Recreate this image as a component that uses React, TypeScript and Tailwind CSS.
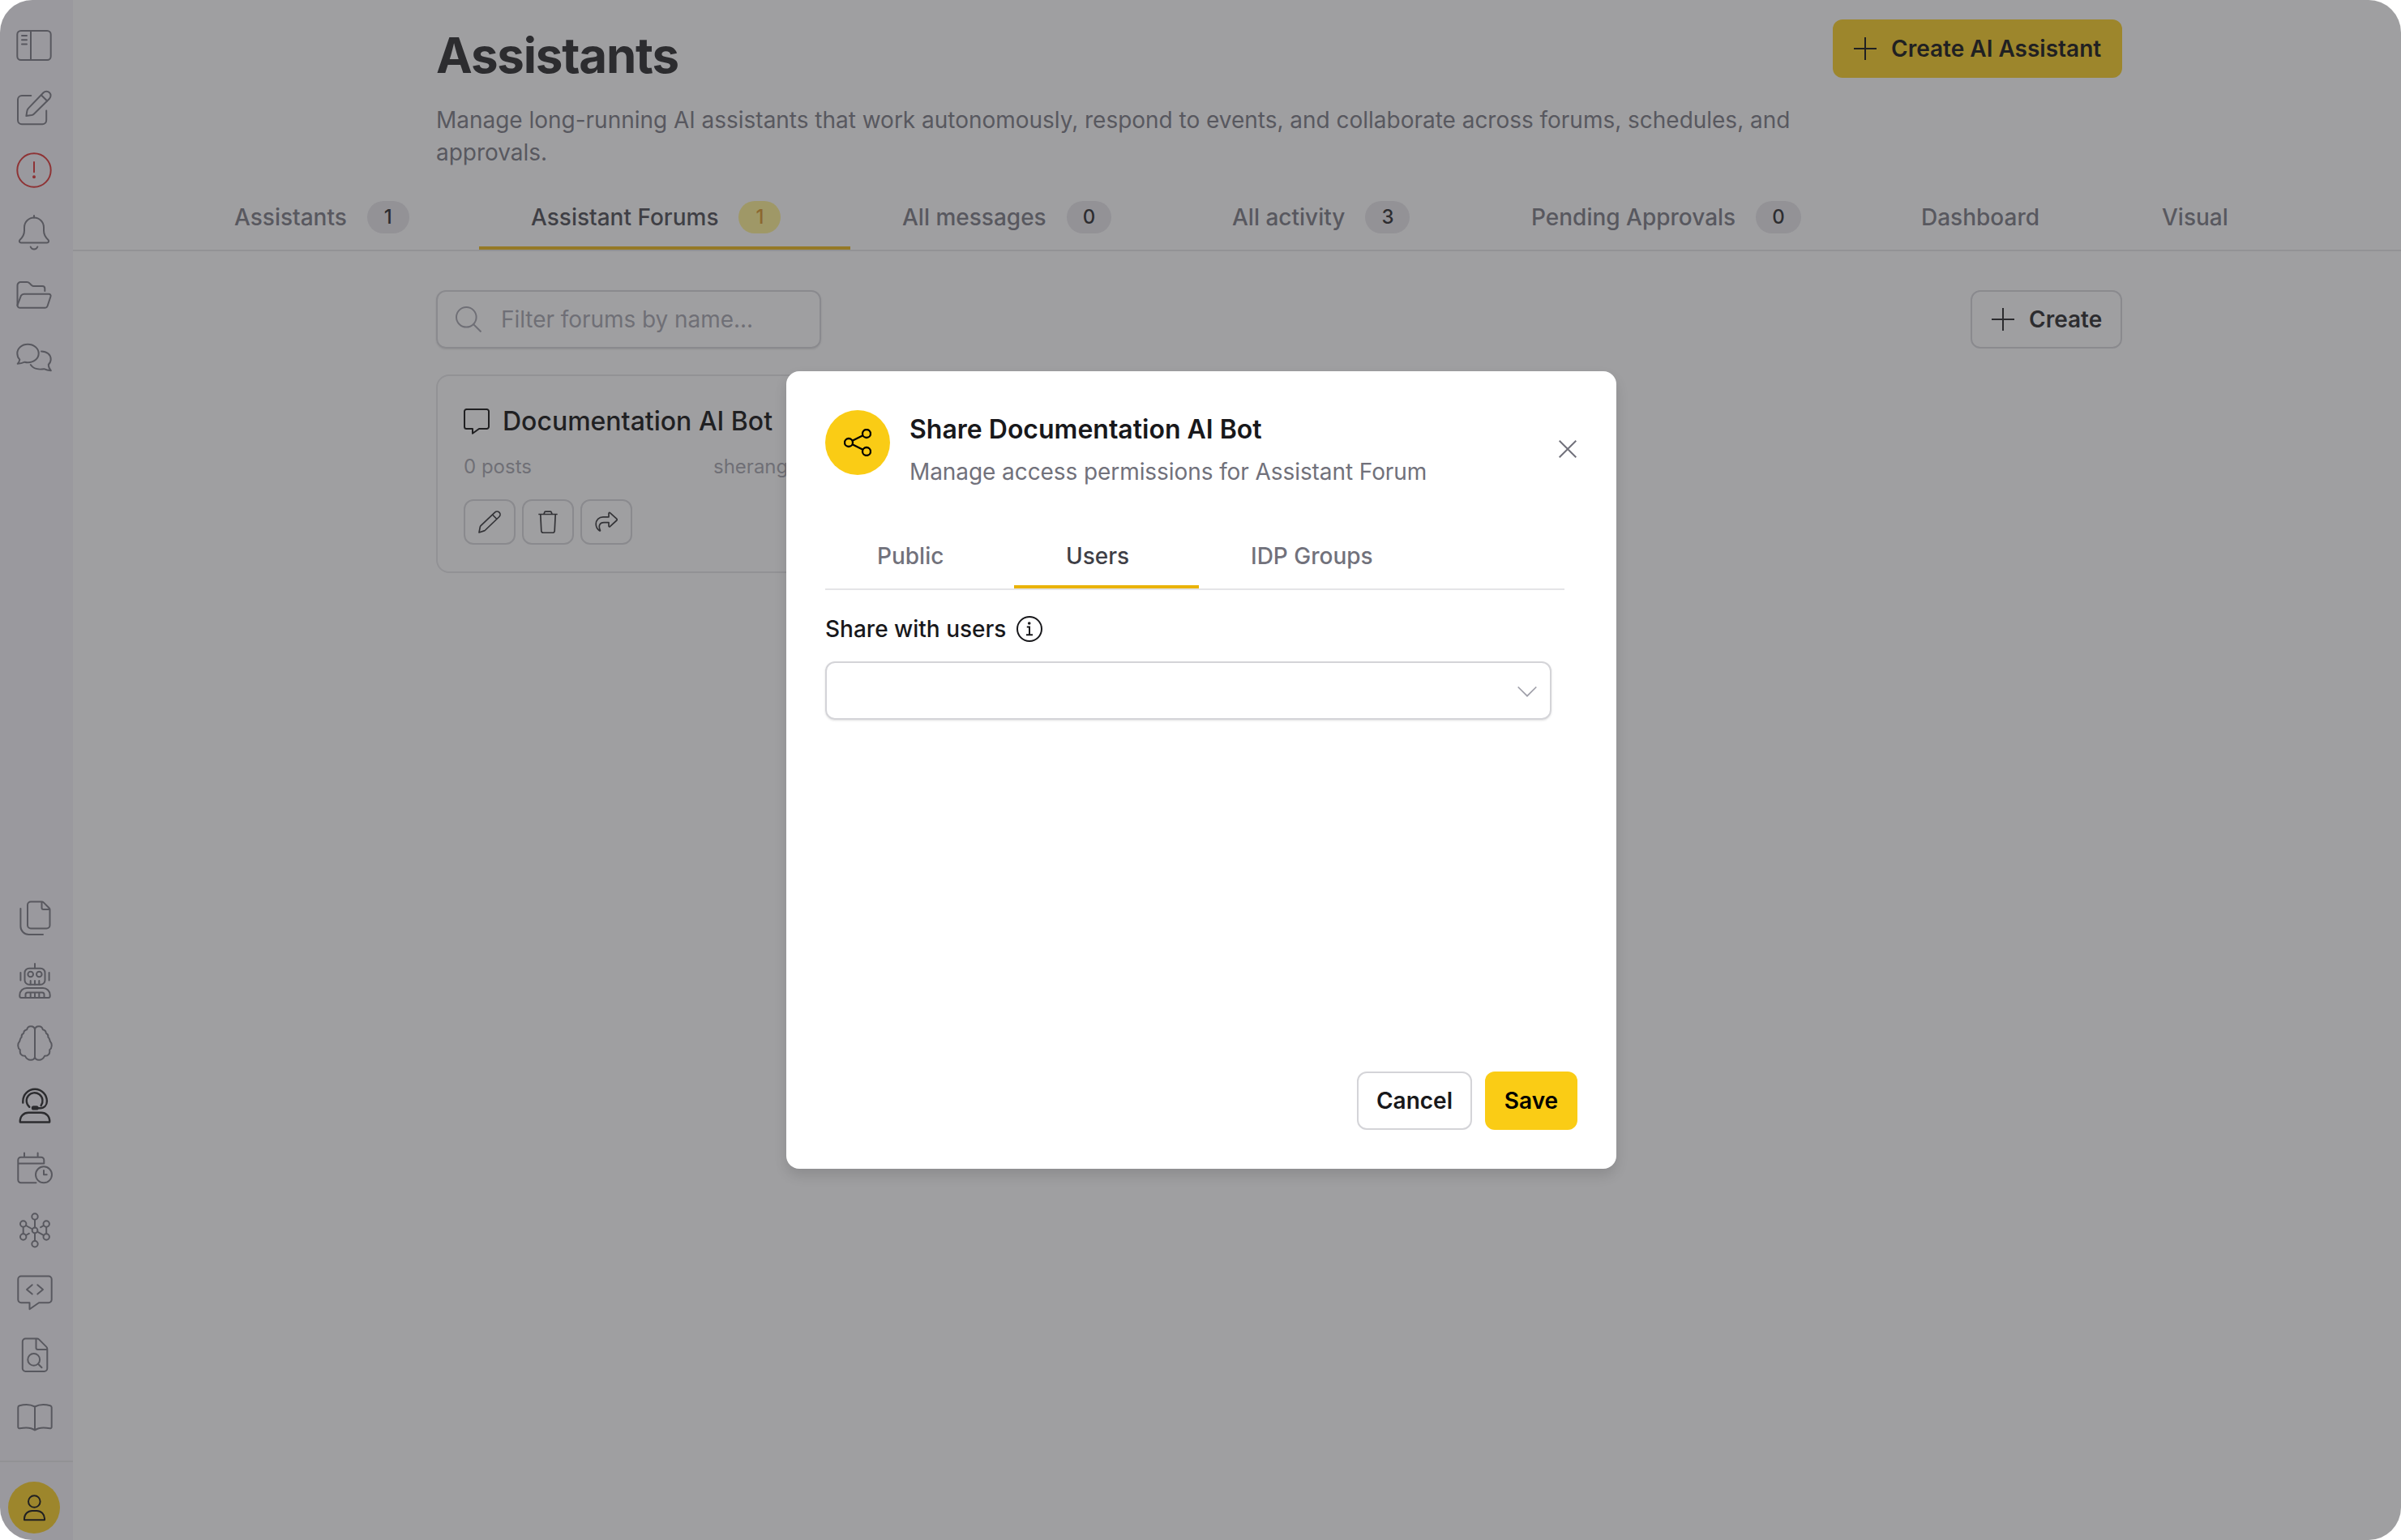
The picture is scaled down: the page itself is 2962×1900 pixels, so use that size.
import React from "react";

type IconProps = { children: React.ReactNode; className?: string };

// every sidebar glyph is drawn on a 44px grid
function NavIcon({ children, className = "text-zinc-500" }: IconProps) {
  return (
    <a href="#" className={className}>
      <svg width="44" height="44" viewBox="0 0 44 44" fill="none" stroke="currentColor" strokeWidth="2" strokeLinecap="round" strokeLinejoin="round">
        {children}
      </svg>
    </a>
  );
}

function Plus() {
  return (
    <svg width="28" height="28" viewBox="0 0 28 28" fill="none" stroke="currentColor" strokeWidth="2">
      <path d="M14 0v28M0 14h28" />
    </svg>
  );
}

function Sidebar() {
  return (
    <aside className="w-[90px] h-full shrink-0 bg-[#f5f3f8] flex flex-col">
      <nav className="flex flex-col gap-[33px] pt-[34px] pl-5">
        <NavIcon>
          <rect x="1.3" y="4" width="41.4" height="36" rx="4.5" />
          <path d="M18 4v36M7 10h6M7 15.2h6M7 20.4h6" />
        </NavIcon>
        <NavIcon>
          <path d="M18.3 7H7a5 5 0 0 0-5 5v25.3a5 5 0 0 0 5 5h25.2a5 5 0 0 0 5-5V25.5" />
          <path d="M12.4 32l1-6.2c.2-1.3.8-2.5 1.8-3.4L33.6 3.3a5.2 5.2 0 0 1 7.4 7.4L22 29.5c-.8.8-1.8 1.4-3 1.6z" />
          <path d="M30.8 6.2l7.3 7.3" />
        </NavIcon>
        <NavIcon className="text-[#dc2626]">
          <circle cx="22" cy="22" r="20.7" />
          <path d="M22 12v12.3" />
          <circle cx="22" cy="30.2" r="1" fill="currentColor" />
        </NavIcon>
        <NavIcon>
          <path d="M22 1v2.5" />
          <path d="M22 3.5a12 12 0 0 1 12 12v4c0 5.2 2.1 8.3 5.3 11.2 1.6 1.6.8 3.8-1.3 3.8H6c-2.1 0-2.9-2.2-1.3-3.8C7.9 27.8 10 24.7 10 19.5v-4a12 12 0 0 1 12-12z" />
          <path d="M17.7 39.5a4.6 4.6 0 0 0 8.6 0" />
        </NavIcon>
        <NavIcon>
          <path d="M35.3 17v-3a3 3 0 0 0-3-3H21.5c-1 0-1.8-.4-2.5-1L16.5 7.5C15.5 6.4 14.6 6 13.2 6H5.5a4 4 0 0 0-4 4v25" />
          <path d="M10.3 20.7h30a2.3 2.3 0 0 1 2.2 3l-4 12a3 3 0 0 1-2.8 2H4.3a2.8 2.8 0 0 1-2.6-3.8l4.2-11.1a4.4 4.4 0 0 1 4.4-2.1z" />
        </NavIcon>
        <NavIcon>
          <path d="M1.7 29.8c1.5-1.7 2.6-3.4 2.6-5.2C2.3 22.6 1.3 19.9 1.3 17 1.3 10.5 7 5.7 14.3 5.7S27.7 10.5 27.7 17s-6 11.2-13.4 11.2c-1.3 0-2.5-.1-3.7-.5-2.5 1.1-5.6 2-8.9 2.1z" />
          <path d="M31 14.5c7 0 11.7 4.2 11.7 9.7 0 2.7-1.1 4.9-2.9 6.6 0 2.8 1 5.3 3 7.4-3.1-.1-5.9-.7-8.5-2-6.3 1.1-13.3-.3-16.5-5.2" />
        </NavIcon>
      </nav>

      <nav className="mt-auto flex flex-col gap-[33px] pl-[21px]">
        <NavIcon>
          <path d="M17 1.5h13.5c.8 0 1.6.3 2.2.9l6.9 6.9c.6.6.9 1.4.9 2.2v19a4 4 0 0 1-4 4H17a4 4 0 0 1-4-4v-25a4 4 0 0 1 4-4z" />
          <path d="M30.5 2v7a2 2 0 0 0 2 2h7.7M4.4 10v22a10 10 0 0 0 10 10H32" />
        </NavIcon>
        <NavIcon>
          <path d="M22 1v5.5M4.4 12v9.5M39.6 12v9.5" />
          <rect x="9.5" y="6.7" width="25" height="20" rx="5.5" />
          <circle cx="16.7" cy="14" r="3.3" />
          <circle cx="27.3" cy="14" r="3.3" />
          <path d="M16.7 22v4.5M22 22v4.5M27.3 22v4.5" />
          <path d="M12 31h20a8.7 8.7 0 0 1 8.7 8.7V41a2 2 0 0 1-2 2H5.3a2 2 0 0 1-2-2v-1.3A8.7 8.7 0 0 1 12 31z" />
          <path d="M10.5 43v-4a2.5 2.5 0 0 1 2.5-2.5h18a2.5 2.5 0 0 1 2.5 2.5v4M16.7 37v6M22 37v6M27.3 37v6" />
        </NavIcon>
        <NavIcon>
          <path d="M22 5v36" />
          <path d="M22 6c0-3-2.1-4.7-5-4.7-2.5 0-4.3 1.5-4.8 3.9-2.3.4-3.9 2.2-4.1 4.6-2 .9-2.7 2.900-2.400 4.700-2.500 2-1.500 3.500-2.700 5.500-2.400 2.600-2.500 8 .8 10.300-.7 4.700 1.500 7.700 6.200 7.500 1.500 3.200 4 4.900 7 4.900 2.600 0 4.300-1 5-3.200" />
          <path d="M22 6c0-3 2.1-4.7 5-4.7 2.5 0 4.3 1.5 4.8 3.9 2.3.4 3.9 2.2 4.1 4.6 2 .9 2.7 2.900 2.400 4.700 2.500 2 1.500 3.500 2.700 5.500 2.400 2.600 2.500 8-.8 10.300.7 4.700-1.500 7.700-6.200 7.500-1.500 3.200-4 4.900-7 4.900-2.600 0-4.300-1-5-3.200" />
        </NavIcon>
        <NavIcon className="text-zinc-900">
          <g strokeWidth="2.4">
            <path d="M7.3 18.5v-2a14.8 14.8 0 0 1 29.6 0c0 5-3.2 8.8-8.6 8.8H24" />
            <path d="M15.3 23.8a9.9 9.9 0 1 1 14.3-1.8" />
            <rect x="19" y="23.4" width="6.5" height="3" rx="1.5" fill="currentColor" />
            <path d="M3.8 42.5c-.5-7.5 4.5-11.7 10.4-11.7h15.6c5.9 0 10.900 4.200 10.400 11.700z" />
          </g>
        </NavIcon>
        <NavIcon>
          <path d="M23.5 40.3H4.8a3.5 3.5 0 0 1-3.5-3.5V12.2a3.5 3.5 0 0 1 3.5-3.5h25a3.5 3.5 0 0 1 3.5 3.5v4.2H1.3M9 3.5v5M25.6 3.5v5" />
          <circle cx="33" cy="30.3" r="10" />
          <path d="M33 25v5.3h3.7" />
        </NavIcon>
        <NavIcon>
          <circle cx="22" cy="22" r="3.4" />
          <circle cx="22" cy="5" r="3.7" />
          <circle cx="22" cy="38.8" r="3.7" />
          <circle cx="7.7" cy="14" r="3.7" />
          <circle cx="7.7" cy="30" r="3.7" />
          <circle cx="36.2" cy="14" r="3.7" />
          <circle cx="36.2" cy="30" r="3.7" />
          <path d="M22 9v9.500M22 25.500V35M7.700 18v8M36.200 18v8M11 16l8 4.500M25 23.600l8 4.500M11 28l3.800-2.200M33 16l-3.800 2.200" />
        </NavIcon>
        <NavIcon>
          <path d="M5 1.5h34a3.7 3.7 0 0 1 3.7 3.7v25.3a3.7 3.7 0 0 1-3.7 3.7H27l-11.5 8v-8H5a3.7 3.7 0 0 1-3.7-3.7V5.2A3.7 3.7 0 0 1 5 1.5z" />
          <path d="M18.7 12.2L12 17.9l6.7 5.7M25.3 12.2l6.7 5.7-6.7 5.7" />
        </NavIcon>
        <NavIcon>
          <path d="M10.5 1.5h14c1 0 2 .4 2.7 1.1l9 9c.7.7 1.1 1.7 1.1 2.7v24a3.7 3.7 0 0 1-3.7 3.7H10.5a3.7 3.7 0 0 1-3.7-3.7v-33a3.7 3.7 0 0 1 3.7-3.8z" />
          <path d="M23.5 2v10.8a2.2 2.2 0 0 0 2.2 2.2H37M26 32.7l4.5 4.6" />
          <circle cx="20.7" cy="27.4" r="7.4" />
        </NavIcon>
        <NavIcon>
          <path d="M22 8.500C16.500 5.500 8.500 5.600 3 7.300c-1 .3-1.700 1.100-1.700 2.100v24.200c0 1.200 1 2 2.200 1.700C10 33.900 17 33.700 22 37.500c5-3.800 12-3.600 18.500-2.200 1.200.3 2.200-.5 2.200-1.700V9.400c0-1-.7-1.800-1.700-2.100-5.500-1.700-13.500-1.800-19 1.200zM22 8.500v29" />
        </NavIcon>
      </nav>

      <div className="mt-[31px] h-[98px] border-t-2 border-zinc-200 pt-6 pl-2.5">
        <div className="size-16 rounded-full bg-[#facc15] text-black">
          <svg width="64" height="64" viewBox="0 0 64 64" fill="none" stroke="currentColor" strokeWidth="2" strokeLinejoin="round">
            <circle cx="32.3" cy="24.5" r="7.3" />
            <path d="M20 47.2v-1.700a9.600 9.600 0 0 1 9.600-9.600h5.800a9.600 9.600 0 0 1 9.600 9.600v1.700z" />
          </svg>
        </div>
      </div>
    </aside>
  );
}

const tabs = [
  { label: "Assistants", count: 1, width: "w-[366px]" },
  { label: "Assistant Forums", count: 1, active: true, width: "w-[458px]" },
  { label: "All messages", count: 0, width: "w-[407px]" },
  { label: "All activity", count: 3, width: "w-[369px]" },
  { label: "Pending Approvals", count: 0, width: "w-[481px]" },
  { label: "Dashboard", width: "w-[297px]" },
  { label: "Visual", width: "w-[232px]" },
];

function Page() {
  return (
    <main className="flex-1 bg-white">
      <header className="ml-[448px] w-[2080px] h-[248px] flex justify-between items-start pt-6">
        <div className="w-[1700px] pt-2">
          <h1 className="text-[60px] leading-[72px] font-bold tracking-[-1.2px] text-zinc-900">Assistants</h1>
          <p className="mt-6 text-[28px] leading-[40px] tracking-[-0.02px] text-zinc-500">
            Manage long-running AI assistants that work autonomously, respond to events, and collaborate across forums, schedules, and approvals.
          </p>
        </div>
        <button className="w-[357px] h-[72px] pl-[26px] flex items-center gap-[18px] rounded-xl bg-[#facc15] text-black text-[28px] font-semibold whitespace-nowrap">
          <Plus />
          Create AI Assistant
        </button>
      </header>

      <div className="flex h-[62px] pl-[135px] border-b-2 border-zinc-200">
        {tabs.map((t) => (
          <div
            key={t.label}
            className={
              "flex items-start pl-16 whitespace-nowrap text-[28px] leading-[40px] font-medium " +
              t.width +
              (t.active ? " text-zinc-700 border-b-4 border-[#eab308]" : " text-zinc-500")
            }
          >
            {t.label}
            {t.count !== undefined && (
              <span
                className={
                  "ml-[25px] h-10 min-w-[52px] px-5 text-center rounded-[20px] text-[24px] " +
                  (t.active ? "bg-[#fef08a] text-[#d9901a]" : "bg-[#e6e4e9] text-zinc-900")
                }
              >
                {t.count}
              </span>
            )}
          </div>
        ))}
      </div>

      <div className="ml-[448px] w-[2080px] pt-12">
        <div className="flex justify-between">
          <div className="w-[475px] h-[72px] flex items-center gap-6 pl-[22px] border-2 border-zinc-300 rounded-xl shadow-sm text-zinc-400">
            <svg width="32" height="32" viewBox="0 0 32 32" fill="none" stroke="currentColor" strokeWidth="2">
              <circle cx="13.3" cy="13.3" r="12.3" />
              <path d="M22 22l9.5 9.5" />
            </svg>
            <span className="text-[28px] tracking-[-0.05px]">Filter forums by name...</span>
          </div>
          <button className="w-[187px] h-[72px] pl-[24px] flex items-center gap-[18px] rounded-xl border-2 border-zinc-300 text-zinc-900 text-[28px] font-semibold">
            <Plus />
            Create
          </button>
        </div>

        <div className="mt-8 w-[673px] h-[245px] border-2 border-zinc-200 rounded-2xl pl-8 pr-8">
          <div className="mt-8 flex items-center gap-4 h-12">
            <svg width="32" height="32" viewBox="0 0 32 32" fill="none" stroke="currentColor" strokeWidth="2" strokeLinejoin="round">
              <path d="M3.5 1h25A2.5 2.5 0 0 1 31 3.5v19a2.5 2.5 0 0 1-2.5 2.5H19l-8 5.8V25H3.500A2.500 2.500 0 0 1 1 22.500v-19A2.500 2.500 0 0 1 3.500 1z" />
            </svg>
            <h2 className="text-[32px] font-medium text-black">Documentation AI Bot</h2>
          </div>
          <div className="mt-3 flex text-[24px] leading-[40px] text-zinc-400">
            <span className="w-[308px]">0 posts</span>
            <span>sherang</span>
          </div>
          <div className="mt-5 flex gap-2 text-zinc-800">
            <CardButton>
              <path d="M1 27l1.300-6.900c.1-.5.4-1 .8-1.400L20.500 2.100a3.700 3.700 0 0 1 5.400 5.400L8.700 24c-.4.400-.8.700-1.400.900z" />
              <path d="M17.500 5l5.500 5.500" />
            </CardButton>
            <CardButton>
              <path d="M2.3 4.500h23.400M9 4.300l.8-2.300c.2-.6.700-.9 1.300-.9h5.800c.6 0 1.100.3 1.300.9l.8 2.300M4.800 4.500l1 20.500c.1 1.500 1 2.300 2.400 2.300h11.600c1.400 0 2.300-.8 2.400-2.300l1-20.500" />
            </CardButton>
            <CardButton>
              <path d="M17 3.400c0-.9.9-1.300 1.500-.7l8.300 7.400c.6.600.6 1.300 0 1.900l-8.300 7.600c-.6.600-1.500.2-1.500-.7v-4.200h-6c-5 0-7.200 3.700-4.600 9.600.2.700-.3.900-.8.500C2.700 22.700 1.200 19.600 1.200 16.500c0-5 3.600-8.700 8.800-8.700h7z" />
            </CardButton>
          </div>
        </div>
      </div>
    </main>
  );
}

function CardButton({ children }: { children: React.ReactNode }) {
  return (
    <button className="w-16 h-14 flex items-center justify-center rounded-xl border-2 border-zinc-300">
      <svg width="28" height="28" viewBox="0 0 28 28" fill="none" stroke="currentColor" strokeWidth="1.7" strokeLinejoin="round">
        {children}
      </svg>
    </button>
  );
}

function ShareModal() {
  return (
    <div className="ml-[2px] w-[1024px] h-[984px] bg-white rounded-2xl shadow-[0_8px_16px_rgba(0,0,0,0.12)] p-12 flex flex-col">
      <div className="flex">
        <div className="size-20 rounded-full bg-[#facc15] flex items-center justify-center">
          <svg width="34" height="34" viewBox="0 0 34 34" fill="none" stroke="#000" strokeWidth="2.3">
            <circle cx="6" cy="17" r="5" />
            <circle cx="28" cy="6" r="5" />
            <circle cx="28" cy="28" r="5" />
            <path d="M10.500 14.800l13-6.500M10.500 19.200l13 6.500" />
          </svg>
        </div>
        <div className="ml-6">
          <h3 className="text-[32px] leading-[48px] font-semibold text-zinc-900">Share Documentation AI Bot</h3>
          <p className="mt-2 text-[28px] leading-[40px] tracking-[-0.08px] text-zinc-500">Manage access permissions for Assistant Forum</p>
        </div>
        <button className="ml-auto mt-[37px] mr-px size-[22px] text-zinc-500">
          <svg width="22" height="22" viewBox="0 0 22 22" fill="none" stroke="currentColor" strokeWidth="2">
            <path d="M.7.7l20.600 20.600M21.300.7L.7 21.300" />
          </svg>
        </button>
      </div>

      <div className="mt-16 w-[912px] h-[62px] flex border-b-2 border-zinc-200 text-[28px] leading-[40px] font-medium text-zinc-500">
        <span className="w-[233px] pl-16">Public</span>
        <span className="w-[228px] pl-16 text-zinc-700 border-b-4 border-[#eab308]">Users</span>
        <span className="pl-16">IDP Groups</span>
      </div>

      <div className="mt-7 flex items-center gap-[13px] h-10 text-[28px] font-medium text-zinc-900">
        Share with users
        <svg width="32" height="32" viewBox="0 0 32 32" fill="none" stroke="currentColor" strokeWidth="2">
          <circle cx="16" cy="16" r="15" />
          <path d="M12.800 13.500H16v9.500M12 23.300h8" />
          <circle cx="15.700" cy="9" r=".8" fill="currentColor" />
        </svg>
      </div>
      <div className="mt-5 w-[896px] h-[72px] flex items-center justify-end pt-0.5 pr-4 border-2 border-zinc-300 rounded-xl shadow-sm text-zinc-400">
        <svg width="24" height="14" viewBox="0 0 24 14" fill="none" stroke="currentColor" strokeWidth="1.7">
          <path d="M.7 1.500L12 12.700 23.300 1.500" />
        </svg>
      </div>

      <div className="mt-auto flex justify-end gap-4 text-[28px] font-semibold">
        <button className="w-[142px] h-[72px] rounded-xl border-2 border-zinc-300 text-zinc-900">Cancel</button>
        <button className="w-[114px] h-[72px] rounded-xl bg-[#facc15] text-black">Save</button>
      </div>
    </div>
  );
}

export default function App() {
  return (
    <div className="relative w-[2962px] h-[1900px] overflow-hidden rounded-[40px] flex font-['Inter',sans-serif]">
      <Sidebar />
      <Page />
      <div className="absolute inset-0 bg-[#3f3f43]/50 flex items-center justify-center">
        <ShareModal />
      </div>
    </div>
  );
}
